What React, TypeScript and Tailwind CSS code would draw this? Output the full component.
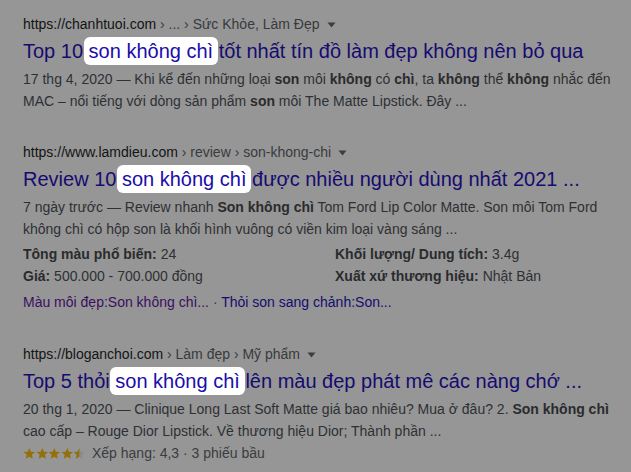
import React from 'react';

const font = { fontFamily: '"Liberation Sans", Arial, sans-serif' };

function Caret() {
  return (
    <svg width="9" height="6" viewBox="0 0 9 6" className="ml-[7px] inline-block align-middle">
      <path d="M0.5 0.5 L8.5 0.5 L4.5 5.5 Z" fill="#3b3d40" />
    </svg>
  );
}

function Mark({ children }: { children: React.ReactNode }) {
  return (
    <span className="-mx-[5px] rounded-[6px] bg-white px-[5px] py-[3px] text-[#1a0dab]">{children}</span>
  );
}

function Crumb({ site, path }: { site: string; path: string }) {
  return (
    <div className="h-[18px] whitespace-nowrap text-[14px] leading-[18px]">
      <span className="text-[#131415]">{site}</span>
      <span className="text-[#383a3d]">{'\u00a0' + path}</span>
      <Caret />
    </div>
  );
}

function Title({ before, after }: { before: string; after: string }) {
  return (
    <div className="mt-[5px] whitespace-nowrap text-[20px] leading-[26px] text-[#150b70]">
      {before}
      <Mark>son không chì</Mark>
      {after}
    </div>
  );
}

function Star({ half }: { half?: boolean }) {
  const d = 'M6.5 0.8 L8.2 4.6 L12.3 5 L9.2 7.8 L10.1 11.9 L6.5 9.8 L2.9 11.9 L3.8 7.8 L0.7 5 L4.8 4.6 Z';
  return (
    <svg width="12.6" height="13" viewBox="0 0 13 13" className="inline-block">
      {half ? (
        <>
          <defs>
            <clipPath id="lefthalf">
              <rect x="0" y="0" width="6.5" height="13" />
            </clipPath>
          </defs>
          <path d={d} fill="#8b8b8b" />
          <path d={d} fill="#94700b" clipPath="url(#lefthalf)" />
        </>
      ) : (
        <path d={d} fill="#94700b" />
      )}
    </svg>
  );
}

export default function App() {
  const snip = 'mt-[4px] whitespace-nowrap text-[14px] leading-[22px] text-[#2e3034]';
  const b = 'font-bold text-[#2a2b2d]';
  return (
    <div className="h-[472px] w-[631px] overflow-hidden bg-[#969696] pl-[23px] pt-[15px]" style={font}>
      {/* result 1 */}
      <div className="mb-[31px]">
        <Crumb site="https://chanhtuoi.com" path="› ... › Sức Khỏe, Làm Đẹp" />
        <Title before="Top 10 " after=" tốt nhất tín đồ làm đẹp không nên bỏ qua" />
        <div className={snip}>
          <div>
            17 thg 4, 2020 — Khi kể đến những loại <span className={b}>son</span> môi{' '}
            <span className={b}>không</span> có <span className={b}>chì</span>, ta{' '}
            <span className={b}>không</span> thể <span className={b}>không</span> nhắc đến
          </div>
          <div>
            MAC – nổi tiếng với dòng sản phẩm <span className={b}>son</span> môi The Matte Lipstick. Đây ...
          </div>
        </div>
      </div>

      {/* result 2 */}
      <div className="mb-[32px]">
        <Crumb site="https://www.lamdieu.com" path="› review › son-khong-chi" />
        <Title before="Review 10 " after=" được nhiều người dùng nhất 2021 ..." />
        <div className={snip}>
          <div>
            7 ngày trước — Review nhanh <span className={b}>Son không chì</span> Tom Ford Lip Color Matte. Son môi Tom Ford
          </div>
          <div>không chì có hộp son là khối hình vuông có viền kim loại vàng sáng ...</div>
        </div>
        <div className="mt-[3px] grid grid-cols-[312px_1fr] whitespace-nowrap text-[14px] leading-[22px] text-[#2e3034]">
          <div>
            <span className={b}>Tông màu phổ biến:</span> 24
          </div>
          <div>
            <span className={b}>Khối lượng/ Dung tích:</span> 3.4g
          </div>
          <div>
            <span className={b}>Giá:</span> 500.000 - 700.000 đồng
          </div>
          <div>
            <span className={b}>Xuất xứ thương hiệu:</span> Nhật Bản
          </div>
        </div>
        <div className="mt-[4px] whitespace-nowrap text-[14px] leading-[22px]">
          <span className="text-[#3a0f62]">Màu môi đẹp:Son không chì...</span>
          <span className="text-[#3a3c3f]"> · </span>
          <span className="text-[#150b70]">Thỏi son sang chảnh:Son...</span>
        </div>
      </div>

      {/* result 3 */}
      <div>
        <Crumb site="https://bloganchoi.com" path="› Làm đẹp › Mỹ phẩm" />
        <Title before="Top 5 thỏi " after=" lên màu đẹp phát mê các nàng chớ ..." />
        <div className={snip}>
          <div>
            20 thg 1, 2020 — Clinique Long Last Soft Matte giá bao nhiêu? Mua ở đâu? 2.{' '}
            <span className={b}>Son không chì</span>
          </div>
          <div>cao cấp – Rouge Dior Lipstick. Về thương hiệu Dior; Thành phần ...</div>
        </div>
        <div className="flex h-[22px] items-center whitespace-nowrap text-[14px] text-[#3a3c3f]">
          <span className="mr-[6px] flex items-center">
            <Star />
            <Star />
            <Star />
            <Star />
            <Star half />
          </span>
          Xếp hạng: 4,3 · 3 phiếu bầu
        </div>
      </div>
    </div>
  );
}
